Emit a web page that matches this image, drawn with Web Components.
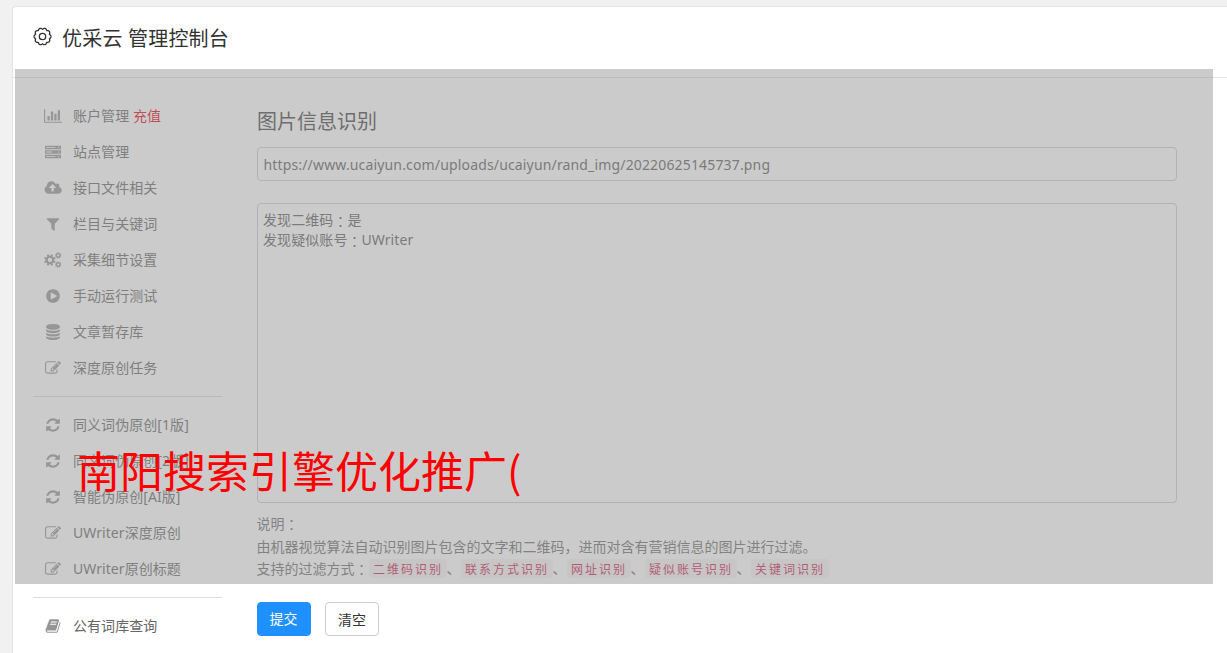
<!DOCTYPE html>
<html lang="zh-CN">
<head>
<meta charset="utf-8">
<title>优采云 管理控制台</title>
<style>
html,body{margin:0;height:100%;overflow:hidden}
body{background:#f1f1f1;color:#666;font:14px/20px "Noto Sans","Noto Sans CJK SC",sans-serif}
</style>
</head>
<body>
<uc-console></uc-console>
<script>
const define = (name, html, setup) => customElements.define(name, class extends HTMLElement {
  connectedCallback() {
    if (this.shadowRoot) return;
    this.attachShadow({ mode: 'open' }).innerHTML = html;
    if (setup) setup(this, this.shadowRoot);
  }
});

/* Toothed wheel with a round hole, as one even-odd path. */
function gear(cx, cy, outer, root, hole, teeth, phase = 0) {
  let d = '';
  const step = Math.PI * 2 / teeth;
  for (let i = 0; i < teeth; i++) {
    const a = i * step + phase;
    [[-.3, root], [-.2, outer], [.2, outer], [.3, root]].forEach(([k, r]) => {
      d += (d ? 'L' : 'M') + (cx + r * Math.cos(a + k * step)).toFixed(1) + ' ' + (cy + r * Math.sin(a + k * step)).toFixed(1);
    });
  }
  return d + `ZM${cx - hole} ${cy}a${hole} ${hole} 0 1 0 ${2 * hole} 0a${hole} ${hole} 0 1 0 ${-2 * hole} 0z`;
}

const ICONS = {
  chart: [2048, 'M640 896v512h-256v-512h256zm384-512v1024h-256v-1024h256zm1024 1152v128h-2048v-1536h128v1408h1920zm-640-896v768h-256v-768h256zm384-384v1152h-256v-1152h256z'],
  server: [1792, 'M0 192h1792v384h-1792zM128 336v96h1024v-96zM1456 384a70 70 0 1 0 140 0a70 70 0 1 0-140 0zM0 704h1792v384h-1792zM128 848v96h640v-96zM1456 896a70 70 0 1 0 140 0a70 70 0 1 0-140 0zM0 1216h1792v384h-1792zM128 1360v96h1024v-96zM1456 1408a70 70 0 1 0 140 0a70 70 0 1 0-140 0z'],
  upload: [2048, 'M1344 864q0-14-9-23l-352-352q-9-9-23-9t-23 9l-351 351q-10 12-10 24 0 14 9 23t23 9h224v352q0 13 9.500 22.500t22.500 9.500h192q13 0 22.500-9.500t9.500-22.500v-352h224q13 0 22.500-9.500t9.500-22.500zm640 288q0 159-112.500 271.500t-271.500 112.500h-1088q-185 0-316.500-131.500t-131.500-316.500q0-130 70-240t188-165q-2-30-2-43 0-212 150-362t362-150q156 0 285.500 87t188.500 231q71-62 166-62 106 0 181 75t75 181q0 76-41 138 130 31 213.500 135.500t83.500 238.500z'],
  filter: [1792, 'M1595 295q17 41-14 70l-493 493v742q0 42-39 59-13 5-25 5-27 0-45-19l-256-256q-19-19-19-45v-486l-493-493q-31-29-14-70 17-39 59-39h1280q42 0 59 39z'],
  cogs: [1960, gear(660, 896, 660, 490, 240, 8, .39) + gear(1590, 384, 365, 265, 125, 8, .2) + gear(1590, 1408, 365, 265, 125, 8, .2)],
  play: [1792, 'M896 128q209 0 385.500 103t279.500 279.500 103 385.500-103 385.500-279.500 279.500-385.500 103-385.500-103-279.500-279.500-103-385.500 103-385.500 279.500-279.500 385.500-103zm384 823q32-18 32-55t-32-55l-544-320q-31-19-64-1-32 19-32 56v640q0 37 32 56 16 8 32 8 17 0 32-9z'],
  database: [1792, 'M896 768q237 0 443-43t325-127v170q0 69-103 128t-280 93.500-385 34.500-385-34.500-280-93.500-103-128v-170q119 84 325 127t443 43zm0 768q237 0 443-43t325-127v170q0 69-103 128t-280 93.500-385 34.500-385-34.500-280-93.500-103-128v-170q119 84 325 127t443 43zm0-384q237 0 443-43t325-127v170q0 69-103 128t-280 93.500-385 34.500-385-34.500-280-93.500-103-128v-170q119 84 325 127t443 43zm0-1152q208 0 385 34.500t280 93.500 103 128v128q0 69-103 128t-280 93.500-385 34.500-385-34.500-280-93.500-103-128v-128q0-69 103-128t280-93.500 385-34.500z'],
  edit: [1792, 'M888 1184l116-116-152-152-116 116v56h96v96h56zm440-720q-16-16-33 1l-350 350q-17 17-1 33t33-1l350-350q17-17 1-33zm80 594v190q0 119-84.500 203.500t-203.500 84.500h-832q-119 0-203.500-84.500t-84.500-203.500v-832q0-119 84.500-203.500t203.500-84.500h832q63 0 117 25 15 7 18 23 3 17-9 29l-49 49q-14 14-32 8-23-6-45-6h-832q-66 0-113 47t-47 113v832q0 66 47 113t113 47h832q66 0 113-47t47-113v-126q0-13 9-22l64-64q15-15 35-7t20 29zm-96-738l288 288-672 672h-288v-288zm444 132l-92 92-288-288 92-92q28-28 68-28t68 28l152 152q28 28 28 68t-28 68z'],
  refresh: [1792, 'M1639 1056q0 5-1 7-64 268-268 434.500t-478 166.500q-146 0-282.500-55t-243.500-157l-129 129q-19 19-45 19t-45-19-19-45v-448q0-26 19-45t45-19h448q26 0 45 19t19 45-19 45l-137 137q71 66 161 102t187 36q134 0 250-65t186-179q11-17 53-117 8-23 30-23h192q13 0 22.500 9.500t9.500 22.500zm25-800v448q0 26-19 45t-45 19h-448q-26 0-45-19t-19-45 19-45l138-138q-148-137-349-137-134 0-250 65t-186 179q-11 17-53 117-8 23-30 23h-199q-13 0-22.500-9.500t-9.500-22.500v-7q65-268 270-434.500t480-166.500q146 0 284 55.500t245 156.500l130-129q19-19 45-19t45 19 19 45z'],
  book: [1792, 'M1703 478q40 57 18 129l-275 906q-19 64-76.500 107.500t-122.500 43.500h-923q-77 0-148.500-53.500t-99.500-131.500q-24-67-2-127 0-4 3-27t4-37q1-8-3-21.500t-3-19.500q2-11 8-21t16.500-23.500 16.500-23.500q23-38 45-91.500t30-91.500q3-10 .5-30t-.5-28q3-11 17-28t17-23q21-36 42-92t25-90q1-9-2.500-32t.5-28q4-13 22-30.500t22-22.500q19-26 42.500-84.500t27.500-96.500q1-8-3-25.500t-2-26.500q2-8 9-18t18-23 17-21q8-12 16.500-30.500t15-35 16-36 19.500-32 26.500-23.500 36-11.500 47.500 5.500l-1 3q38-9 51-9h761q74 0 114 56t18 130l-274 906q-36 119-71.500 153.500t-128.500 34.500h-869q-27 0-38 15-11 16-1 43 24 70 144 70h923q29 0 56-15.500t35-41.500l300-987q7-22 5-57 38 15 59 43zm-1064 2q-4 13 2 22.500t20 9.500h608q13 0 25.500-9.500t16.500-22.500l21-64q4-13-2-22.500t-20-9.500h-608q-13 0-25.500 9.500t-16.500 22.500zm-83 256q-4 13 2 22.500t20 9.500h608q13 0 25.500-9.500t16.500-22.500l21-64q4-13-2-22.500t-20-9.500h-608q-13 0-25.500 9.500t-16.500 22.500z']
};

define('uc-icon', '<style>:host{display:flex;justify-content:center;width:20px;color:#959595}svg{display:block;flex:none}</style>', (el, root) => {
  const [w, d] = ICONS[el.getAttribute('name')];
  root.innerHTML += `<svg width="${w / 112}" height="16" viewBox="0 0 ${w} 1792" fill="currentColor" fill-rule="evenodd"><path d="${d}"/></svg>`;
});

define('uc-item', `<style>
:host{display:flex;align-items:center;height:36px;padding-left:10px;gap:10px;white-space:nowrap;letter-spacing:.060px}
::slotted(b){font-weight:400;color:#e60012}
</style><span><slot></slot></span>`, (el, root) => {
  const icon = document.createElement('uc-icon');
  icon.setAttribute('name', el.getAttribute('icon'));
  root.querySelector('span').before(icon);
});

define('uc-rule', '<style>:host{display:block;height:1px;margin:10px 0;background:#ddd}</style>');

define('uc-header', `<style>
:host{display:flex;align-items:center;box-sizing:border-box;height:71px;padding:0 0 8px 20px;gap:10px;border-bottom:1px solid #e4e4e4;color:#333;font-size:20px}
svg{display:block;margin-bottom:3px}
span{line-height:28px;white-space:nowrap;letter-spacing:.200px;padding-top:1px}
</style><svg width="19" height="19" viewBox="0 0 19 19" fill="none" stroke="#333" stroke-width="1.300"><path stroke-linejoin="round"/><circle cx="9.500" cy="9.500" r="3.200"/></svg><span><slot></slot></span>`, (el, root) => {
  /* scalloped rim with ten lobes */
  let d = '';
  for (let i = 0; i < 120; i++) {
    const a = i / 120 * Math.PI * 2, r = 7.200 + 1.300 * Math.abs(Math.cos(5 * a));
    d += (i ? 'L' : 'M') + (9.500 + r * Math.cos(a)).toFixed(2) + ' ' + (9.500 + r * Math.sin(a)).toFixed(2);
  }
  root.querySelector('path').setAttribute('d', d + 'Z');
});

define('uc-field', `<style>
:host{display:block;box-sizing:border-box;width:920px;height:34px;padding:7px 5.500px 5px;border:1px solid #ccc;border-radius:4px;line-height:20px;white-space:nowrap;color:#5c5c5c;letter-spacing:.155px}
:host([multi]){height:300px;margin-top:22px;padding:6px 5px;letter-spacing:.080px}
</style><slot></slot>`);

/* Full-width colon, centred in its cell. */
define('uc-colon', `<style>
:host{display:inline-block;width:14px;height:20px;line-height:22px;vertical-align:top;font-family:"Noto Sans CJK TC",sans-serif}
</style><span lang="zh-TW">：</span>`);

define('uc-code', `<style>
:host{display:inline-block;height:19px;line-height:21px;padding:0 3.500px 0 4.500px;border-radius:4px;background:#f9f2f4;color:#c7254e;font-size:12px;letter-spacing:2px;vertical-align:top;margin-top:1px}
</style><slot></slot>`);

define('uc-button', `<style>
:host{display:flex;align-items:center;justify-content:center;box-sizing:border-box;width:54px;height:34px;border:1px solid #ccc;border-radius:4px;background:#fff;color:#333}
:host([primary]){background:#1e90ff;border-color:#1e90ff;color:#fff;padding:0 1px 1px 0}
:host(:not([primary])){padding-top:1px}
</style><span><slot></slot></span>`);

define('uc-banner', `<style>
:host{position:absolute;left:15px;top:69px;width:1198px;height:515px;box-sizing:border-box;padding:372px 0 0 62px;background:rgba(151,151,151,.5);color:#f00;font:43px/56px "Noto Sans CJK SC",sans-serif;white-space:nowrap}
</style><slot></slot>`);

define('uc-console', `<style>
:host{display:block;box-sizing:border-box;height:653px;padding:6px 0 0 12px;overflow:hidden}
section{box-sizing:border-box;width:1240px;height:647px;border:1px solid #e4e4e4;border-width:1px 0 0 1px;border-radius:4px 0 0 0;background:#fff}
.body{display:flex;padding:20px 0 0 20px;gap:35px}
nav{width:189px;flex:none}
main{width:920px;flex:none;padding-top:10px}
h3{margin:0 0 11px;font-size:20px;line-height:28px;font-weight:400;color:#444}
.line{height:20px}
.help{margin:10px 0 0 -.5px;line-height:22px;white-space:nowrap;color:#6c6c6c}
.help div{height:22.500px}
.actions{display:flex;gap:14px;margin-top:21.500px}
</style>
<section>
<uc-header>优采云 管理控制台</uc-header>
<div class="body">
<nav>
<uc-item icon="chart">账户管理 <b>充值</b></uc-item>
<uc-item icon="server">站点管理</uc-item>
<uc-item icon="upload">接口文件相关</uc-item>
<uc-item icon="filter">栏目与关键词</uc-item>
<uc-item icon="cogs">采集细节设置</uc-item>
<uc-item icon="play">手动运行测试</uc-item>
<uc-item icon="database">文章暂存库</uc-item>
<uc-item icon="edit">深度原创任务</uc-item>
<uc-rule></uc-rule>
<uc-item icon="refresh">同义词伪原创[1版]</uc-item>
<uc-item icon="refresh">同义词伪原创[2版]</uc-item>
<uc-item icon="refresh">智能伪原创[AI版]</uc-item>
<uc-item icon="edit">UWriter深度原创</uc-item>
<uc-item icon="edit">UWriter原创标题</uc-item>
<uc-rule></uc-rule>
<uc-item icon="book">公有词库查询</uc-item>
</nav>
<main>
<h3>图片信息识别</h3>
<uc-field>https://www.ucaiyun.com/uploads/ucaiyun/rand_img/20220625145737.png</uc-field>
<uc-field multi><div class="line">发现二维码<uc-colon></uc-colon>是</div><div class="line">发现疑似账号<uc-colon></uc-colon>UWriter</div></uc-field>
<div class="help">
<div>说明<uc-colon></uc-colon></div>
<div>由机器视觉算法自动识别图片包含的文字和二维码，进而对含有营销信息的图片进行过滤。</div>
<div>支持的过滤方式<uc-colon></uc-colon><uc-code>二维码识别</uc-code>、<uc-code>联系方式识别</uc-code>、<uc-code>网址识别</uc-code>、<uc-code>疑似账号识别</uc-code>、<uc-code>关键词识别</uc-code></div>
</div>
<div class="actions"><uc-button primary>提交</uc-button><uc-button>清空</uc-button></div>
</main>
</div>
</section>
<uc-banner>南阳搜索引擎优化推广(</uc-banner>`);
</script>
</body>
</html>
